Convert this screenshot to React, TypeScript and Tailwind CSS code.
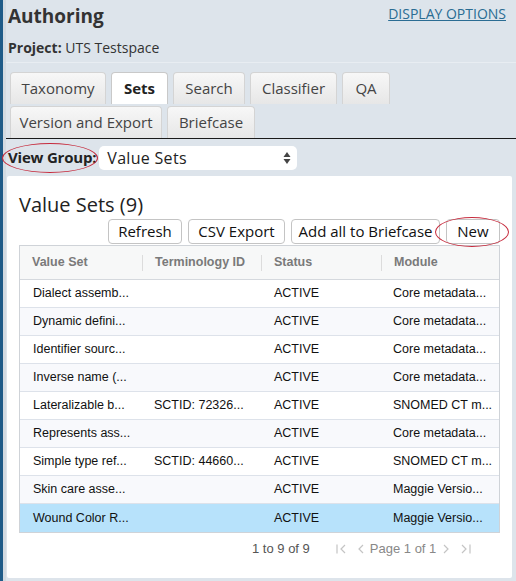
import React from 'react';

const rows = [
    { name: 'Dialect assemb...', tid: '', status: 'ACTIVE', module: 'Core metadata...' },
    { name: 'Dynamic defini...', tid: '', status: 'ACTIVE', module: 'Core metadata...' },
    { name: 'Identifier sourc...', tid: '', status: 'ACTIVE', module: 'Core metadata...' },
    { name: 'Inverse name (...', tid: '', status: 'ACTIVE', module: 'Core metadata...' },
    { name: 'Lateralizable b...', tid: 'SCTID: 72326...', status: 'ACTIVE', module: 'SNOMED CT m...' },
    { name: 'Represents ass...', tid: '', status: 'ACTIVE', module: 'Core metadata...' },
    { name: 'Simple type ref...', tid: 'SCTID: 44660...', status: 'ACTIVE', module: 'SNOMED CT m...' },
    { name: 'Skin care asse...', tid: '', status: 'ACTIVE', module: 'Maggie Versio...' },
    { name: 'Wound Color R...', tid: '', status: 'ACTIVE', module: 'Maggie Versio...' },
];

const Tab: React.FC<{ label: string; w: string; active?: boolean }> = ({ label, w, active }) => (
    <div
        className={
            'h-[32px] flex items-center justify-center rounded-t-[4px] border border-b-0 text-[15px] ' +
            w +
            (active
                ? ' bg-white border-[#c9c9c9] font-bold text-[#222]'
                : ' bg-gradient-to-b from-[#f7f7f7] to-[#e7e7e7] border-[#d4d4d4] text-[#444]')
        }
    >
        {label}
    </div>
);

const Btn: React.FC<{ label: string; w: string }> = ({ label, w }) => (
    <div className={'h-[25px] flex items-center justify-center bg-white border border-[#c4c4c4] rounded-[4px] text-[15px] text-[#111] ' + w}>
        {label}
    </div>
);

export default function App() {
    return (
        <div className="w-[516px] h-[581px] bg-[#dde4eb] flex overflow-hidden font-['Open_Sans',sans-serif]">
            <div className="w-[3px] bg-[#1f5b88] shrink-0" />
            <div className="w-[3px] bg-[#d3dae1] shrink-0" />
            <div className="flex-1 flex flex-col">
                {/* header */}
                <div className="h-[63px] border-b border-[#e8edf2] flex flex-col px-[2px]">
                    <div className="flex items-start justify-between h-[33px]">
                        <div className="text-[19px] font-bold text-[#333] leading-none mt-[7px]">Authoring</div>
                        <div className="text-[14px] text-[#2a6c93] underline leading-none mt-[7px] mr-[8px]">DISPLAY OPTIONS</div>
                    </div>
                    <div className="text-[14px] text-[#333] leading-none mt-[8px]">
                        <span className="font-bold">Project:</span> UTS Testspace
                    </div>
                </div>
                {/* tabs */}
                <div className="pl-[4px] pt-[9px] flex flex-col gap-[2px] border-b-[1.5px] border-[#1a1a1a] h-[76px]">
                    <div className="flex gap-[5px]">
                        <Tab label="Taxonomy" w="w-[96px]" />
                        <Tab label="Sets" w="w-[57px]" active />
                        <Tab label="Search" w="w-[72px]" />
                        <Tab label="Classifier" w="w-[87px]" />
                        <Tab label="QA" w="w-[48px]" />
                    </div>
                    <div className="flex gap-[5px]">
                        <Tab label="Version and Export" w="w-[152px]" />
                        <Tab label="Briefcase" w="w-[88px]" />
                    </div>
                </div>
                {/* view group */}
                <div className="h-[37px] flex items-center relative">
                    <div className="text-[15px] font-bold text-[#222] ml-[2px] tracking-[-0.2px]">View Group:</div>
                    <div className="absolute left-[-4px] top-[4px] w-[96px] h-[30px] rounded-[50%] border-[1.5px] border-[#c62a3c]" />
                    <div className="ml-[3px] w-[198px] h-[24px] bg-white rounded-[5px] flex items-center justify-between pl-[8px] pr-[6px] text-[16px] text-[#222] tracking-[0.3px]">
                        <span>Value Sets</span>
                        <svg width="8" height="14" viewBox="0 0 8 14">
                            <path d="M4 1 L7.5 6 L0.5 6 Z" fill="#444" />
                            <path d="M4 13 L7.5 8 L0.5 8 Z" fill="#444" />
                        </svg>
                    </div>
                </div>
                {/* panel */}
                <div className="ml-[1px] mr-[4px] h-[402px] bg-white rounded-[2px] px-[12px] flex flex-col">
                    <div className="text-[20px] text-[#222] mt-[19px] leading-none">Value Sets (9)</div>
                    <div className="flex justify-end gap-[6px] mt-[4px] relative">
                        <Btn label="Refresh" w="w-[74px]" />
                        <Btn label="CSV Export" w="w-[97px]" />
                        <Btn label="Add all to Briefcase" w="w-[149px]" />
                        <Btn label="New" w="w-[54px]" />
                        <div className="absolute right-[-9px] top-[-2px] w-[74px] h-[30px] rounded-[50%] border-[1.5px] border-[#c62a3c]" />
                    </div>
                    <div className="mt-[1px] w-[481px] border border-[#cfd3d8] font-['Liberation_Sans',Arial,sans-serif] text-[12.5px]">
                        <div className="h-[34px] bg-[#f7f8f8] border-b border-[#d5d9de] grid grid-cols-[122px_119px_120px_120px] text-[#7a7a7a] font-bold">
                            {['Value Set', 'Terminology ID', 'Status', 'Module'].map((h, i) => (
                                <div key={h} className="flex items-center">
                                    {i > 0 && <div className="w-px h-[16px] bg-[#dcdcdc]" />}
                                    <span className="ml-[12px]">{h}</span>
                                </div>
                            ))}
                        </div>
                        {rows.map((r, i) => (
                            <div
                                key={r.name}
                                className={
                                    'h-[28px] grid grid-cols-[122px_119px_120px_120px] items-center text-[#111] ' +
                                    (i === rows.length - 1
                                        ? 'bg-[#b7e2fb]'
                                        : 'border-b border-[#dde2ea] ' + (i % 2 === 1 ? 'bg-[#f8f9fc]' : 'bg-white'))
                                }
                            >
                                <span className="pl-[13px] whitespace-nowrap">{r.name}</span>
                                <span className="pl-[12px] whitespace-nowrap">{r.tid}</span>
                                <span className="pl-[13px]">{r.status}</span>
                                <span className="pl-[12px] whitespace-nowrap">{r.module}</span>
                            </div>
                        ))}
                    </div>
                    <div className="flex items-center mt-[7px] pl-[233px] font-['Liberation_Sans',Arial,sans-serif] text-[13px] h-[18px]">
                        <span className="text-[#555]">1 to 9 of 9</span>
                        <span className="ml-[26px] text-[#bbb] flex items-center gap-[10px]">
                            <svg width="12" height="10" viewBox="0 0 12 10"><path d="M1 0.5 V9.5 M9 1 L5 5 L9 9" stroke="#c4c4c4" fill="none" strokeWidth="1.2" /></svg>
                            <svg width="6" height="10" viewBox="0 0 6 10"><path d="M5 1 L1 5 L5 9" stroke="#c4c4c4" fill="none" strokeWidth="1.2" /></svg>
                        </span>
                        <span className="ml-[6px] text-[#888]">Page 1 of 1</span>
                        <span className="ml-[7px] flex items-center gap-[10px]">
                            <svg width="6" height="10" viewBox="0 0 6 10"><path d="M1 1 L5 5 L1 9" stroke="#c4c4c4" fill="none" strokeWidth="1.2" /></svg>
                            <svg width="12" height="10" viewBox="0 0 12 10"><path d="M3 1 L7 5 L3 9 M11 0.5 V9.5" stroke="#c4c4c4" fill="none" strokeWidth="1.2" /></svg>
                        </span>
                    </div>
                </div>
            </div>
        </div>
    );
}
